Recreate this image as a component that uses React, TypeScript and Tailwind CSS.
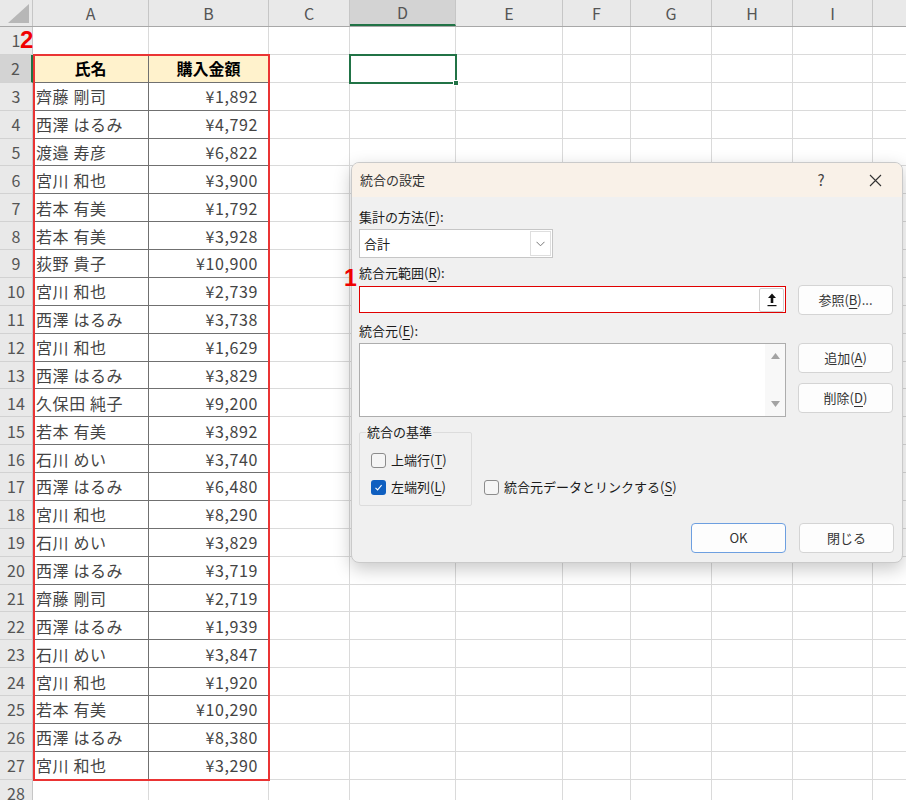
import React from "react";

type Col = { label: string; w: string };

const cols: Col[] = [
  { label: "A", w: "w-[116px]" },
  { label: "B", w: "w-[120px]" },
  { label: "C", w: "w-[81px]" },
  { label: "D", w: "w-[106px]" },
  { label: "E", w: "w-[107px]" },
  { label: "F", w: "w-[68px]" },
  { label: "G", w: "w-[81px]" },
  { label: "H", w: "w-[81px]" },
  { label: "I", w: "w-[80px]" },
  { label: "", w: "w-[81px]" },
];

const people: [string, string][] = [
  ["齊藤 剛司", "¥1,892"],
  ["西澤 はるみ", "¥4,792"],
  ["渡邉 寿彦", "¥6,822"],
  ["宮川 和也", "¥3,900"],
  ["若本 有美", "¥1,792"],
  ["若本 有美", "¥3,928"],
  ["荻野 貴子", "¥10,900"],
  ["宮川 和也", "¥2,739"],
  ["西澤 はるみ", "¥3,738"],
  ["宮川 和也", "¥1,629"],
  ["西澤 はるみ", "¥3,829"],
  ["久保田 純子", "¥9,200"],
  ["若本 有美", "¥3,892"],
  ["石川 めい", "¥3,740"],
  ["西澤 はるみ", "¥6,480"],
  ["宮川 和也", "¥8,290"],
  ["石川 めい", "¥3,829"],
  ["西澤 はるみ", "¥3,719"],
  ["齊藤 剛司", "¥2,719"],
  ["西澤 はるみ", "¥1,939"],
  ["石川 めい", "¥3,847"],
  ["宮川 和也", "¥1,920"],
  ["若本 有美", "¥10,290"],
  ["西澤 はるみ", "¥8,380"],
  ["宮川 和也", "¥3,290"],
];

const rows = Array.from({ length: 28 }, (_, i) => i + 1);

function cellText(row: number, col: number) {
  if (row === 2 && col === 0) return "氏名";
  if (row === 2 && col === 1) return "購入金額";
  if (row >= 3 && row <= 27 && col < 2) return people[row - 3][col];
  return "";
}

function Sheet() {
  return (
    <div className="flex flex-col">
      {/* column headers */}
      <div className="flex h-[27px] shrink-0 border-b border-[#a8a8a8] bg-[#e9e9e9]">
        <div className="flex w-[33px] shrink-0 items-end justify-end border-r border-[#c6c6c6] pb-[3px] pr-[3px]">
          <svg width="21" height="19" viewBox="0 0 21 19">
            <polygon points="21,0 21,19 0,19" fill="#b7b7b7" />
          </svg>
        </div>
        {cols.map((c) => (
          <div
            key={c.label + c.w}
            className={`${c.w} flex shrink-0 items-center justify-center border-r border-[#c6c6c6] text-[16px] text-[#555] ${
              c.label === "D" ? "bg-[#d3d3d3] border-b-2 border-b-[#217346]" : ""
            }`}
          >
            {c.label}
          </div>
        ))}
      </div>

      {rows.map((r) => {
        const inTable = r >= 2 && r <= 27;
        return (
          <div key={r} className="flex h-[27.88px] shrink-0">
            <div
              className={`flex w-[33px] shrink-0 items-center justify-center border-b border-[#d2d2d2] text-[16px] text-[#555] ${
                r === 2
                  ? "bg-[#d3d3d3] border-r-2 border-r-[#217346]"
                  : "bg-[#e9e9e9] border-r border-r-[#c6c6c6]"
              }`}
            >
              {r}
            </div>
            {cols.map((c, ci) => {
              const tableCol = ci < 2;
              const darkB = tableCol && (inTable || r === 1);
              const darkR = tableCol && inTable;
              const text = cellText(r, ci);
              return (
                <div
                  key={ci}
                  className={`${c.w} flex shrink-0 items-center border-b border-r text-[16px] ${
                    darkB ? "border-b-[#707070]" : "border-b-[#dadada]"
                  } ${darkR ? "border-r-[#707070]" : "border-r-[#dadada]"} ${
                    r === 2 && tableCol
                      ? "bg-[#fff2cc] justify-center font-bold text-black"
                      : ci === 1
                        ? "justify-end pr-[10px] tracking-[0.6px] text-[#444]"
                        : "pl-[3px] tracking-[0.6px] text-[#444]"
                  }`}
                >
                  {text}
                </div>
              );
            })}
          </div>
        );
      })}
    </div>
  );
}

function Btn({ children, primary }: { children: React.ReactNode; primary?: boolean }) {
  return (
    <div
      className={`flex h-[30px] w-[95px] items-center justify-center rounded-[4px] border bg-[#fdfdfd] text-[#333] ${
        primary ? "border-[#6d9fe0]" : "border-[#d4d4d4]"
      }`}
    >
      {children}
    </div>
  );
}

function U({ children }: { children: React.ReactNode }) {
  return <span className="underline underline-offset-[3px]">{children}</span>;
}

function Check({ checked }: { checked?: boolean }) {
  return checked ? (
    <div className="flex h-[15px] w-[15px] items-center justify-center rounded-[3px] bg-[#0f5fc0]">
      <svg width="11" height="11" viewBox="0 0 11 11">
        <polyline points="2.5,5.8 4.6,7.9 8.6,3.2" fill="none" stroke="#fff" strokeWidth="1.1" />
      </svg>
    </div>
  ) : (
    <div className="h-[15px] w-[15px] rounded-[3px] border border-[#8c8c8c] bg-[#f5f5f5]" />
  );
}

function Dialog() {
  return (
    <div className="absolute left-[351px] top-[162px] h-[401px] w-[552px] overflow-hidden rounded-[8px] border border-[#cacaca] bg-[#f0f0f0] text-[13px] text-[#1b1b1b] shadow-[0_6px_18px_rgba(0,0,0,0.22)]">
      {/* title bar */}
      <div className="flex h-[34px] items-center justify-between bg-[#f9f1e8] pl-[8px]">
        <span className="text-[#333]">統合の設定</span>
        <div className="flex h-full items-center gap-[8px] pr-[4px]">
          <span className="w-[46px] text-center text-[15px] text-[#444]">?</span>
          <span className="flex w-[46px] justify-center">
            <svg width="13" height="13" viewBox="0 0 13 13">
              <path d="M1 1L12 12M12 1L1 12" stroke="#333" strokeWidth="1.1" />
            </svg>
          </span>
        </div>
      </div>

      <div className="flex flex-col pl-[7px] pr-[8px] pt-[10px]">
        <div className="leading-[20px]">
          集計の方法(<U>F</U>):
        </div>
        <div className="mt-[2px] flex h-[29px] w-[194px] items-center justify-between border border-[#c6c6c6] bg-white pl-[4px]">
          <span>合計</span>
          <div className="mr-[1px] flex h-[25px] w-[21px] items-center justify-center border border-[#dedede] bg-white">
            <svg width="9" height="6" viewBox="0 0 9 6">
              <polyline points="0.5,0.8 4.5,4.8 8.5,0.8" fill="none" stroke="#777" strokeWidth="1" />
            </svg>
          </div>
        </div>

        <div className="mt-[5px] leading-[20px]">
          統合元範囲(<U>R</U>):
        </div>
        <div className="mt-[2px] flex h-[29px] items-center gap-[12px]">
          <div className="flex h-[27px] w-[427px] items-center justify-end border border-[#e00000] bg-white pr-[1px]">
            <div className="flex h-[24px] w-[25px] items-center justify-center rounded-[2px] border border-[#d0d0d0] bg-white">
              <svg width="10" height="14" viewBox="0 0 10 14">
                <path d="M5 0.5L9 5H6.3V10H3.7V5H1Z" fill="#111" />
                <rect x="0.5" y="12" width="9" height="1.2" fill="#111" />
              </svg>
            </div>
          </div>
          <Btn>
            参照(<U>B</U>)...
          </Btn>
        </div>

        <div className="mt-[7px] leading-[20px]">
          統合元(<U>E</U>):
        </div>
        <div className="mt-[2px] flex gap-[12px]">
          <div className="flex h-[74px] w-[427px] justify-end border border-[#adadad] bg-white">
            <div className="flex w-[20px] flex-col items-center justify-between bg-[#f8f8f8] py-[9px]">
              <svg width="9" height="6" viewBox="0 0 9 6">
                <polygon points="4.5,0 9,6 0,6" fill="#a3a3a3" />
              </svg>
              <svg width="9" height="6" viewBox="0 0 9 6">
                <polygon points="0,0 9,0 4.5,6" fill="#a3a3a3" />
              </svg>
            </div>
          </div>
          <div className="flex flex-col gap-[10px]">
            <Btn>
              追加(<U>A</U>)
            </Btn>
            <Btn>
              削除(<U>D</U>)
            </Btn>
          </div>
        </div>

        <div className="mt-[5px] flex items-end gap-[12px]">
          <fieldset className="w-[113px] rounded-[2px] border border-[#dcdcdc] pb-[8px]">
            <legend className="ml-[6px] px-[1px] leading-[20px]">統合の基準</legend>
            <div className="mt-[8px] flex h-[20px] items-center gap-[5px] pl-[11px]">
              <Check />
              <span>
                上端行(<U>T</U>)
              </span>
            </div>
            <div className="mt-[7px] flex h-[20px] items-center gap-[5px] pl-[11px]">
              <Check checked />
              <span>
                左端列(<U>L</U>)
              </span>
            </div>
          </fieldset>
          <div className="mb-[9px] flex h-[20px] items-center gap-[5px]">
            <Check />
            <span>
              統合元データとリンクする(<U>S</U>)
            </span>
          </div>
        </div>

        <div className="mt-[17px] flex justify-end gap-[13px]">
          <Btn primary>OK</Btn>
          <Btn>閉じる</Btn>
        </div>
      </div>
    </div>
  );
}

export default function App() {
  return (
    <div className="relative h-[800px] w-[906px] overflow-hidden bg-white font-['Noto_Sans_CJK_JP','Noto_Sans',sans-serif]">
      <Sheet />

      {/* red outline round the table */}
      <div className="pointer-events-none absolute left-[33px] top-[54px] h-[727px] w-[237px] border-2 border-[#ea3434]" />

      {/* selected cell D2 */}
      <div className="pointer-events-none absolute left-[349px] top-[54px] h-[30px] w-[108px] border-2 border-[#217346]">
        <div className="absolute -bottom-[4px] -right-[4px] h-[6px] w-[6px] border border-white bg-[#217346]" />
      </div>

      <span className="absolute left-[20px] top-[28px] font-['Liberation_Sans',sans-serif] text-[24px] font-bold leading-none text-[#f00000]">
        2
      </span>

      <Dialog />

      <span className="absolute left-[344px] top-[267px] font-['Liberation_Sans',sans-serif] text-[23px] font-bold leading-none text-[#f00000]">
        1
      </span>
    </div>
  );
}
